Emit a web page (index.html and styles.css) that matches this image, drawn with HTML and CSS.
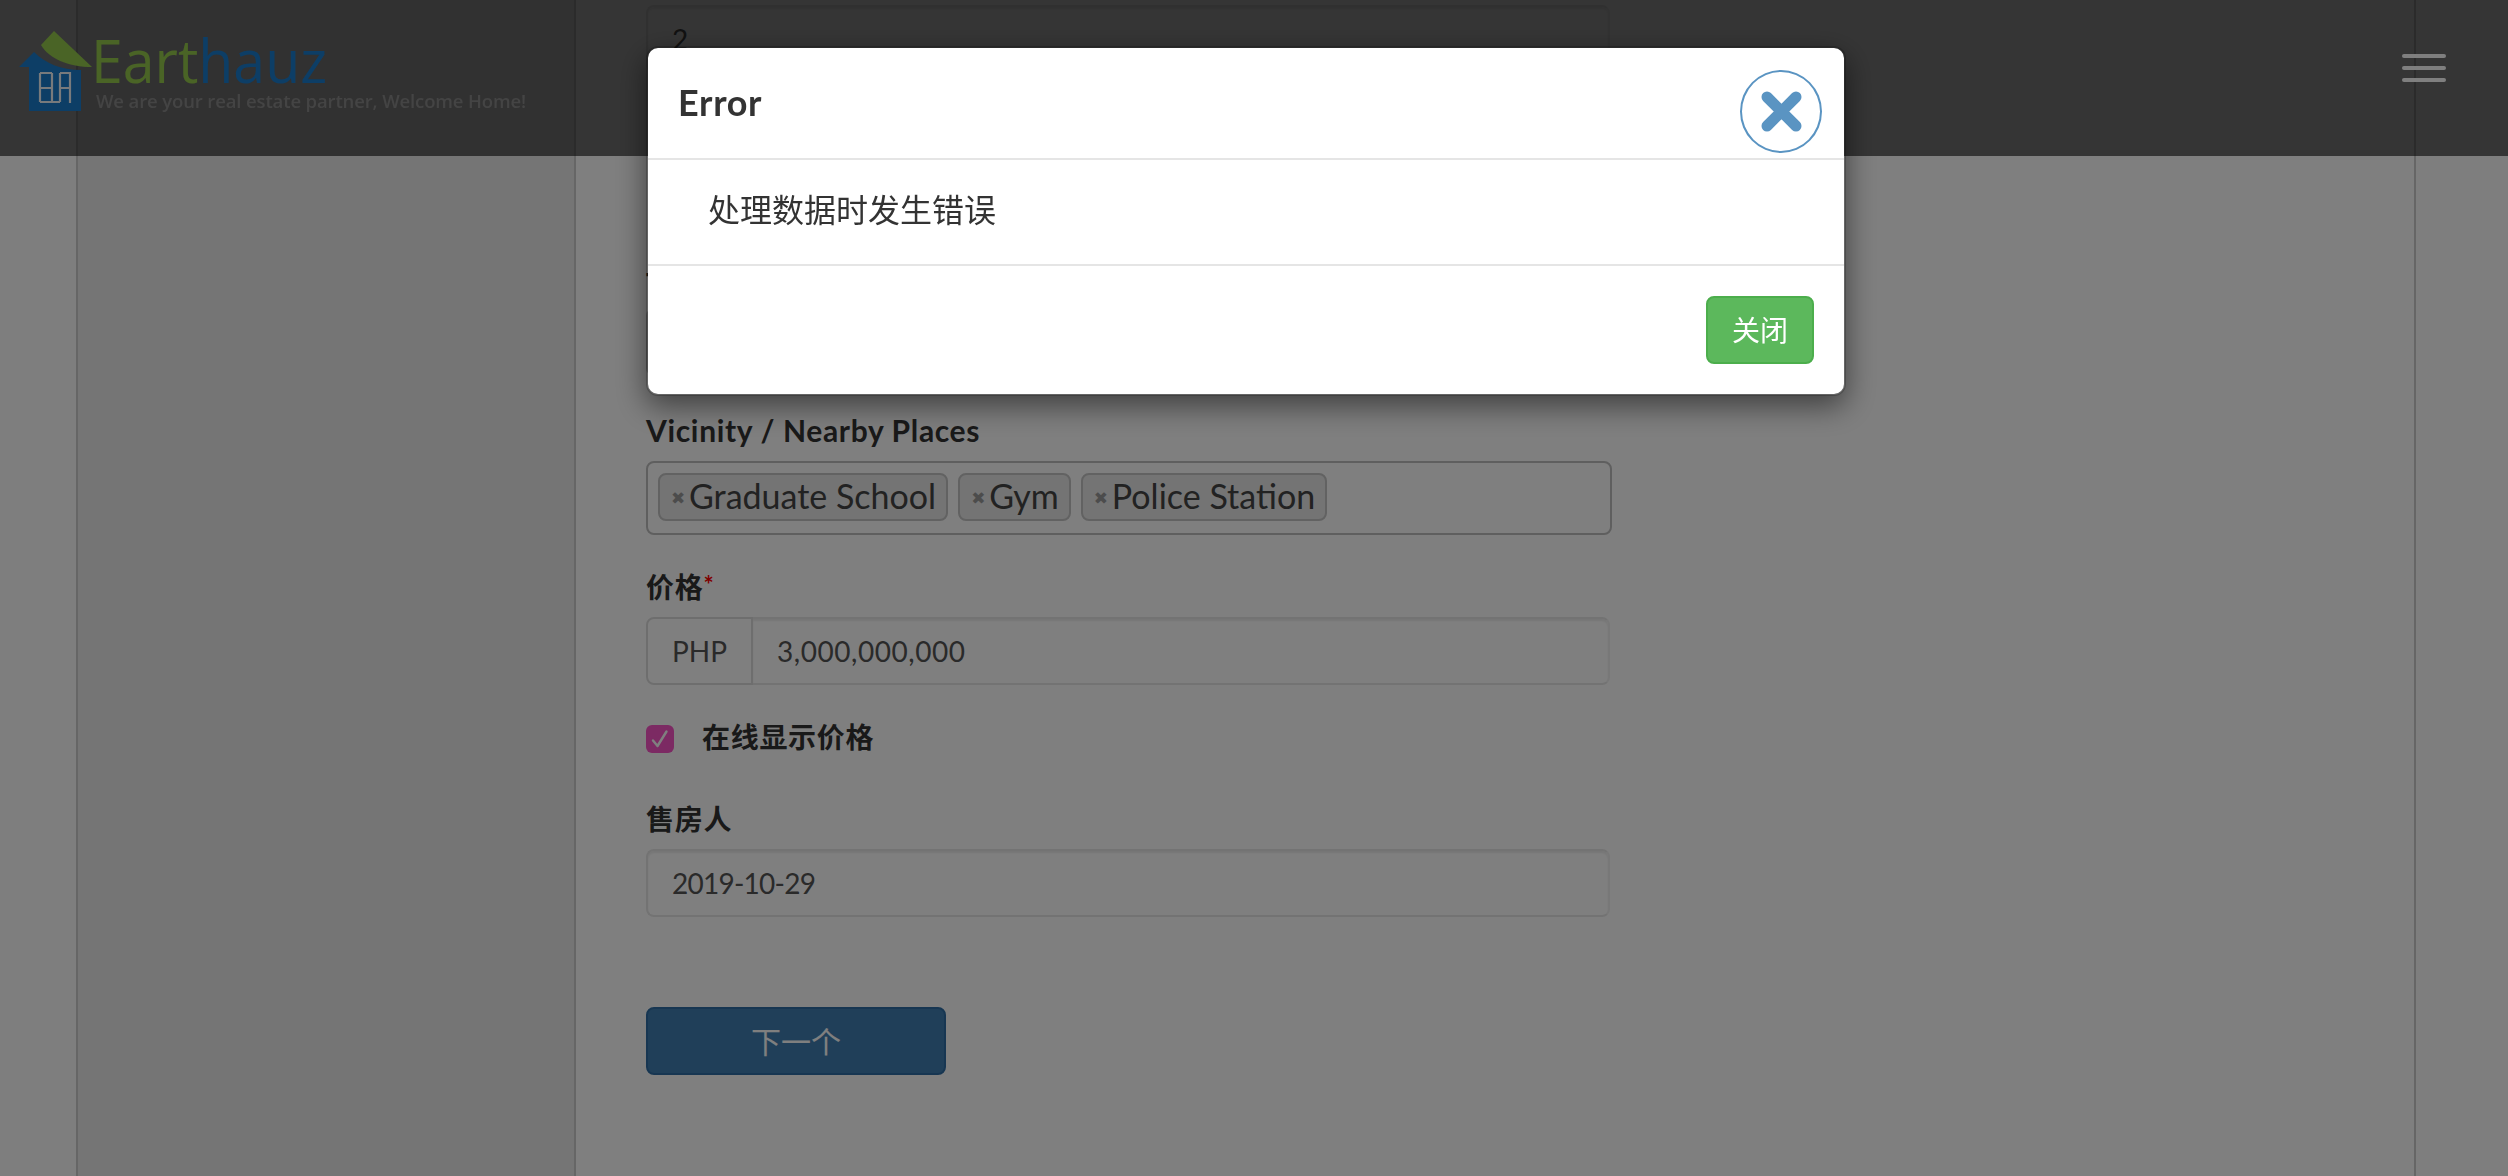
FILE: index.html
```html
<!DOCTYPE html>
<html lang="zh">
<head>
<meta charset="utf-8">
<title>Earthauz</title>
<link rel="stylesheet" href="styles.css">
</head>
<body>
<div class="shell">
  <div class="side-strip"></div>
  <aside class="sidebar"></aside>
  <main class="main">
    <form class="form">
      <div class="group group-first"><input class="field" value="2"></div>
      <div class="group group-hidden">
        <label class="label label-tight">Type</label>
        <input class="field field-strong">
      </div>
      <div class="group group-tags">
        <label class="label label-latin">Vicinity / Nearby Places</label>
        <div class="tags">
          <span class="tag"><span class="tag-x">✖</span><span class="tag-text">Graduate School</span></span>
          <span class="tag"><span class="tag-x">✖</span><span class="tag-text">Gym</span></span>
          <span class="tag"><span class="tag-x">✖</span><span class="tag-text">Police Station</span></span>
        </div>
      </div>
      <div class="group">
        <label class="label">价格<sup class="req">*</sup></label>
        <div class="input-group">
          <span class="addon">PHP</span>
          <input class="field field-joined" value="3,000,000,000">
        </div>
      </div>
      <div class="group check-row">
        <span class="check">
          <svg viewBox="0 0 28 28" width="28" height="28"><path d="M7 15.5 L11.5 21 L20.5 6.5" fill="none" stroke="#fff" stroke-width="2.4" stroke-linecap="round" stroke-linejoin="round"/></svg>
        </span>
        <label class="label label-inline">在线显示价格</label>
      </div>
      <div class="group group-last">
        <label class="label">售房人</label>
        <input class="field field-date" value="2019-10-29">
      </div>
      <button type="button" class="next-btn">下一个</button>
    </form>
  </main>
  <div class="side-strip"></div>
</div>

<header class="topbar">
  <a class="brand">
    <svg class="brand-mark" viewBox="0 0 74 81" width="74" height="81">
      <path d="M35 0 L22 14 C30 28 50 36 73 36 Z" fill="#94c84c"/>
      <path d="M15 21 L0 36 L10 36 L10 80 L62 80 L62 39 C42 39 26 32 15 21 Z" fill="#1a7ccc"/>
      <path d="M21 42 H33 M21 57 H33 M21 71 H41 M21 42 V71 M33 42 V71 M41 57 H51 M41 42 H51 M41 42 V71 M51 41 V72" fill="none" stroke="#f0f4f8" stroke-width="2.2"/>
    </svg>
    <span class="brand-text">
      <span class="brand-name"><span class="brand-green">Eart</span><span class="brand-blue">hauz</span></span>
      <span class="brand-tag">We are your real estate partner, Welcome Home!</span>
    </span>
  </a>
  <button type="button" class="burger"><span></span><span></span><span></span></button>
</header>

<div class="backdrop"></div>

<div class="modal-layer">
  <section class="modal">
    <div class="modal-head">
      <h4 class="modal-title">Error</h4>
      <button type="button" class="modal-close">
        <svg viewBox="0 0 41 41" width="41" height="41"><path d="M6 6 L35 35 M35 6 L6 35" fill="none" stroke="#5a94c2" stroke-width="11" stroke-linecap="round"/></svg>
      </button>
    </div>
    <div class="modal-body"><p class="modal-msg">处理数据时发生错误</p></div>
    <div class="modal-foot"><button type="button" class="close-btn">关闭</button></div>
  </section>
</div>
</body>
</html>
```
FILE: styles.css
```css
* { box-sizing: border-box; }
html, body { margin: 0; padding: 0; height: 100%; overflow: hidden; }
body {
  background: #fff;
  color: #333;
  font-family: Lato, "Noto Sans CJK SC", sans-serif;
  font-size: 28px;
  line-height: 40px;
}

/* page behind the dialog */
.shell { display: flex; height: 1176px; }
.side-strip { flex: 1 1 0; background: #fcfcfc; }
.side-strip:first-child { flex: 0 0 76px; }
.sidebar {
  flex: 0 0 500px;
  background: #ebebeb;
  border-left: 2px solid #ccc;
  border-right: 2px solid #ccc;
}
.main {
  flex: 0 0 1840px;
  padding: 5px 0 0 70px;
  border-right: 2px solid #ccc;
}
.form { width: 966px; }
.group { margin-bottom: 30px; }
.group-first { margin-bottom: 190px; }
.group-hidden { margin-bottom: 35px; }
.group-tags { margin-bottom: 32px; }
.group-last { margin-bottom: 90px; }

.label { display: block; margin-bottom: 10px; font-weight: 700; color: #333; letter-spacing: 0.7px; }
.label-latin { font-size: 30px; line-height: 38px; margin-bottom: 12px; letter-spacing: 0.65px; }
.label-tight { margin-bottom: 5px; }
.label-inline { margin: 0; }
.req { color: #f00; font-size: 24px; line-height: 0; vertical-align: 4px; }

.field {
  display: block;
  width: 964px;
  height: 68px;
  padding: 0 24px;
  border: 2px solid #e6e6e6;
  border-right-color: #f0f0f0;
  border-radius: 8px;
  background: #fff;
  box-shadow: inset 0 2px 2px rgba(0, 0, 0, .075);
  color: #555;
  font: 28px/40px Lato, "Noto Sans CJK SC", sans-serif;
  letter-spacing: 0.55px;
  outline: none;
}
.field-strong { border-color: #ccc; }
.field-date { letter-spacing: -0.75px; }
.input-group { display: flex; width: 964px; }
.addon {
  flex: 0 0 107px;
  height: 68px;
  padding: 12px 0;
  border: 2px solid #ddd;
  border-radius: 8px 0 0 8px;
  color: #555;
  text-align: center;
}
.field-joined { flex: 1 1 0; width: auto; border-left: 0; border-radius: 0 8px 8px 0; }

.tags {
  display: flex;
  gap: 10px;
  height: 74px;
  padding: 10px;
  border: 2px solid #bebebe;
  border-radius: 8px;
}
.tag {
  display: flex;
  align-items: center;
  height: 48px;
  padding: 0 10px 2px 12px;
  border: 2px solid #c4c4c4;
  border-radius: 8px;
  background: #e8e8e8;
  color: #444;
  font-size: 34px;
  white-space: nowrap;
}
.tag-x {
  width: 17px;
  color: #999;
  font: 700 17px/1 "DejaVu Sans", sans-serif;
  position: relative;
  top: 2px;
  left: -1px;
}

.check-row { display: flex; gap: 28px; height: 54px; padding-top: 2px; }
.check {
  flex: 0 0 28px;
  height: 28px;
  margin-top: 8px;
  border-radius: 6px;
  background: #f954c6;
}
.check svg { display: block; }

.next-btn {
  display: block;
  width: 300px;
  height: 68px;
  border: 2px solid #2e6da4;
  border-radius: 8px;
  background: #417fb2;
  color: #fff;
  font: 30px/40px Lato, "Noto Sans CJK SC", sans-serif;
}

/* top bar, lies over the page */
.topbar {
  position: fixed;
  top: 0;
  left: 0;
  right: 0;
  height: 156px;
  display: flex;
  justify-content: space-between;
  align-items: flex-start;
  padding: 31px 62px 0 19px;
  background: rgba(0, 0, 0, .586);
}
.brand { display: flex; gap: 1px; }
.brand-mark { flex: none; }
.brand-text { display: flex; flex-direction: column; }
.brand-name {
  display: block;
  margin-left: -3px;
  font: 400 60px/58px "Open Sans", sans-serif;
  height: 59px;
  transform: scaleX(.953);
  transform-origin: left center;
}
.brand-green { color: #94c84c; }
.brand-blue { color: #1a7ccc; }
.brand-tag {
  margin-left: 2px;
  color: #888;
  font: 600 18.5px/22px "Open Sans", sans-serif;
  letter-spacing: -0.13px;
  white-space: nowrap;
}
.burger {
  display: flex;
  flex-direction: column;
  gap: 8px;
  width: 44px;
  margin-top: 23px;
  padding: 0;
  border: 0;
  background: none;
}
.burger span { display: block; width: 44px; height: 4px; border-radius: 2px; background: #fff; }

/* dialog */
.backdrop { position: fixed; top: 0; right: 0; bottom: 0; left: 0; background: rgba(0, 0, 0, .5); }
.modal-layer { position: fixed; top: 0; right: 0; bottom: 0; left: 0; padding: 46px 0 0 646px; }
.modal {
  width: 1200px;
  border: 2px solid rgba(0, 0, 0, .2);
  border-radius: 12px;
  background: #fff;
  background-clip: padding-box;
  box-shadow: 0 10px 30px rgba(0, 0, 0, .5);
}
.modal-head {
  display: flex;
  justify-content: space-between;
  align-items: flex-start;
  height: 112px;
  padding: 22px 22px 0 30px;
  border-bottom: 2px solid #e5e5e5;
}
.modal-title {
  margin: 0;
  padding-top: 7px;
  color: #333;
  font-size: 36px;
  line-height: 50px;
  font-weight: 700;
  letter-spacing: 0.7px;
}
.modal-close {
  display: flex;
  align-items: center;
  justify-content: center;
  width: 82px;
  height: 83px;
  padding: 0;
  border: 2px solid #5a94c2;
  border-radius: 50%;
  background: #fff;
}
.modal-body { height: 104px; padding: 28px 30px 30px; }
.modal-msg { margin: 0; padding-left: 30px; font-size: 32px; line-height: 44px; color: #333; }
.modal-foot {
  display: flex;
  justify-content: flex-end;
  padding: 30px;
  border-top: 2px solid #e5e5e5;
}
.close-btn {
  width: 108px;
  height: 68px;
  padding: 0;
  border: 2px solid #4cae4c;
  border-radius: 8px;
  background: #5cb85c;
  color: #fff;
  font: 28px/40px Lato, "Noto Sans CJK SC", sans-serif;
}
```
